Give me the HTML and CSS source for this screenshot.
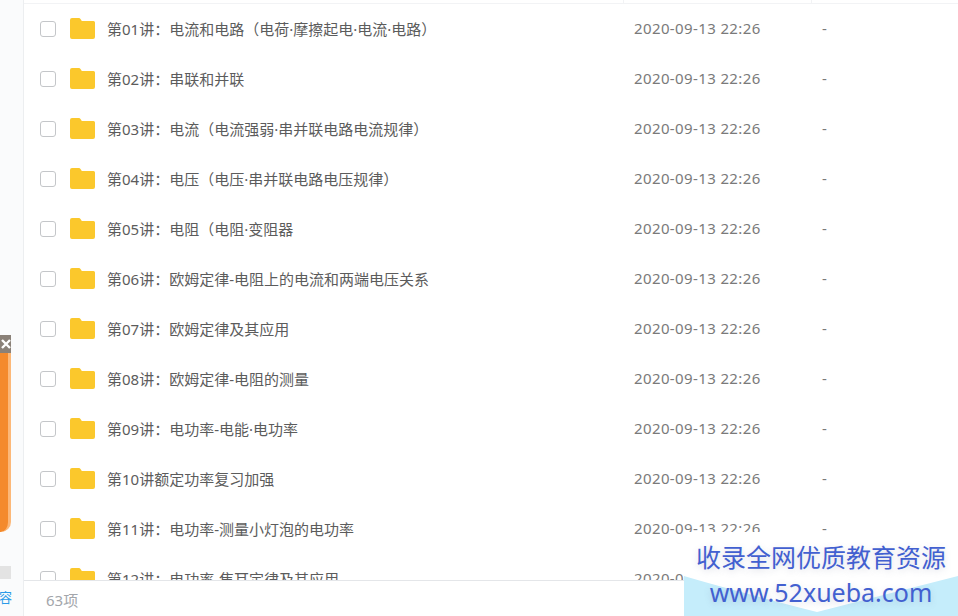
FILE: index.html
```html
<!DOCTYPE html>
<html>
<head>
    <title>文件列表</title>
    <link rel="stylesheet" href="styles.css">
</head>
<body>
    <div class="page">
        <aside class="side">
            <div class="ad">
                <div class="ad-close">
                    <svg width="10" height="10" viewBox="0 0 10 10"><path d="M1 1 9 9M9 1 1 9" stroke="#fff" stroke-width="2.4" fill="none"/></svg>
                </div>
                <div class="ad-body"></div>
            </div>
            <div class="side-block"></div>
            <div class="side-link">内容</div>
        </aside>
        <main class="main">
            <div class="top-line">
                <div class="col-name"></div>
                <div class="col-date"></div>
                <div class="col-size"></div>
            </div>
            <div class="rows" id="rows"></div>
            <div class="foot">63项</div>
        </main>
    </div>
    <div class="stamp">
        <svg class="stamp-bg" width="274" height="40" viewBox="0 0 274 40" preserveAspectRatio="none"><path d="M0 0Q40 12 133 36L274 0V40H0Z" fill="#c5edfb"/></svg>
        <div class="stamp-title">收录全网优质教育资源</div>
        <div class="stamp-url">www.52xueba.com</div>
    </div>
    <script>
        const names = [
            '第01讲：电流和电路（电荷·摩擦起电·电流·电路）',
            '第02讲：串联和并联',
            '第03讲：电流（电流强弱·串并联电路电流规律）',
            '第04讲：电压（电压·串并联电路电压规律）',
            '第05讲：电阻（电阻·变阻器',
            '第06讲：欧姆定律-电阻上的电流和两端电压关系',
            '第07讲：欧姆定律及其应用',
            '第08讲：欧姆定律-电阻的测量',
            '第09讲：电功率-电能·电功率',
            '第10讲额定功率复习加强',
            '第11讲：电功率-测量小灯泡的电功率',
            '第12讲：电功率-焦耳定律及其应用'
        ];
        const folder = '<svg class="folder" width="25" height="21" viewBox="0 0 25 21"><path d="M2 0h6.500c1 0 1.600.5 2.200 1.300L11.800 3H23.500a1.500 1.500 0 0 1 1.500 1.500V19a2 2 0 0 1-2 2H2a2 2 0 0 1-2-2V2a2 2 0 0 1 2-2Z" fill="#fbc82c"/></svg>';
        document.getElementById('rows').innerHTML = names.map(name => `
            <div class="row">
                <div class="col-name">
                    <span class="check"></span>
                    ${folder}
                    <span class="name">${name}</span>
                </div>
                <div class="col-date">2020-09-13 22:26</div>
                <div class="col-size">-</div>
            </div>
        `).join('');
    </script>
</body>
</html>
```

FILE: styles.css
```css
* {
    box-sizing: border-box;
}
html, body {
    margin: 0;
    height: 616px;
    overflow: hidden;
    background: #fff;
}
body {
    font-family: "Noto Sans", "Noto Sans CJK SC", sans-serif;
    position: relative;
}
.page {
    display: flex;
    height: 616px;
}
.side {
    width: 24px;
    flex: none;
    background: #fafbfc;
    border-right: 1px solid #eceef0;
    padding-top: 335px;
    display: flex;
    flex-direction: column;
}
.ad {
    width: 11px;
    height: 197px;
}
.ad-close {
    height: 18px;
    background: #8a8178;
    display: flex;
    align-items: center;
    justify-content: center;
}
.ad-body {
    height: 179px;
    background: #f48a2c;
    border-right: 3px solid #fcb878;
    border-bottom-right-radius: 10px;
}
.side-block {
    width: 11px;
    height: 13px;
    margin-top: 34px;
    background: #e3e3e3;
}
.side-link {
    margin-top: 9px;
    width: 12px;
    overflow: hidden;
    direction: rtl;
    white-space: nowrap;
    font-size: 13px;
    line-height: 18px;
    color: #2b9ae8;
}
.main {
    flex: 1;
    min-width: 0;
    display: flex;
    flex-direction: column;
}
.top-line {
    height: 4px;
    flex: none;
    display: flex;
    border-bottom: 1px solid #f2f3f5;
}
.top-line .col-name,
.top-line .col-date {
    border-right: 1px solid #f2f3f5;
}
.col-name {
    width: 600px;
    flex: none;
    display: flex;
    align-items: center;
}
.col-date {
    width: 188px;
    flex: none;
    padding: 0 0 2px 10px;
    font-size: 15px;
    letter-spacing: .38px;
    white-space: nowrap;
    color: #7a7a7a;
}
.col-size {
    flex: 1;
    padding: 0 0 2px 10px;
    color: #7a7a7a;
}
.rows {
    flex: 1;
    overflow: hidden;
}
.row {
    height: 50px;
    display: flex;
    align-items: center;
    font-size: 15px;
}
.check {
    width: 16px;
    height: 16px;
    margin-left: 16px;
    flex: none;
    border: 1px solid #c4c6c9;
    border-radius: 3px;
    background: #fff;
}
.folder {
    margin-left: 14px;
    margin-top: -2px;
    flex: none;
}
.name {
    margin-left: 12px;
    padding-bottom: 2px;
    white-space: nowrap;
    color: #5c5c5c;
}
.foot {
    height: 36px;
    flex: none;
    border-top: 1px solid #e4e6e9;
    background: #fff;
    padding-left: 22px;
    line-height: 38px;
    font-size: 15px;
    color: #a3a6ab;
}
.stamp {
    position: absolute;
    right: 0;
    bottom: 0;
    width: 274px;
    height: 84px;
    background: #fff;
    text-align: center;
    color: #4260d0;
    text-shadow: 0 2px 6px rgba(110, 120, 150, .25);
}
.stamp-bg {
    position: absolute;
    left: 0;
    bottom: 0;
}
.stamp-title {
    position: relative;
    font-size: 25px;
    line-height: 34px;
    padding-top: 8px;
    box-sizing: content-box;
}
.stamp-url {
    position: relative;
    font-size: 25px;
    line-height: 36px;
}
```
